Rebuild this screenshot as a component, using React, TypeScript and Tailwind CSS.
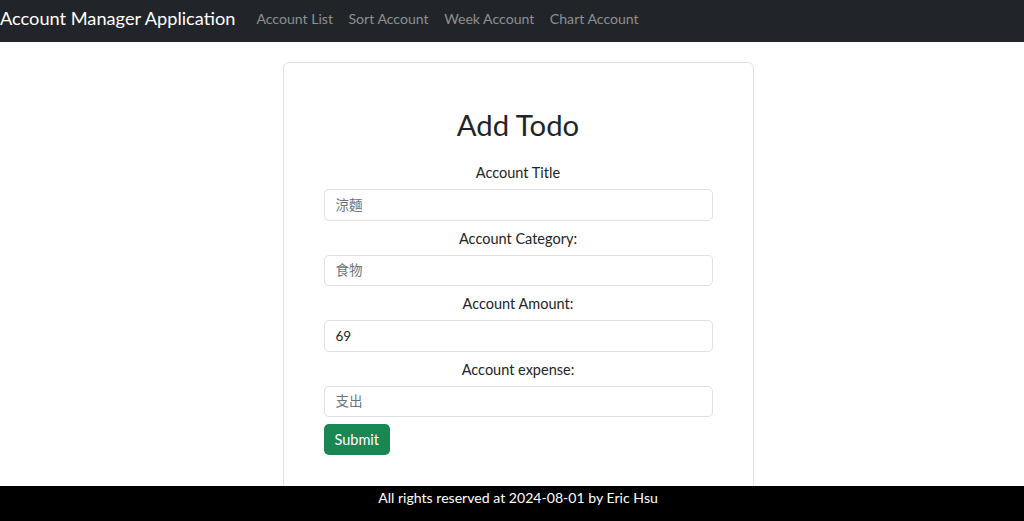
export default function App() {
  const fields = [
    { label: "Account Title", placeholder: "涼麵", value: "" },
    { label: "Account Category:", placeholder: "食物", value: "" },
    { label: "Account Amount:", placeholder: "", value: "69" },
    { label: "Account expense:", placeholder: "支出", value: "" },
  ];

  return (
    <div
      className="min-h-screen bg-white text-[#212529]"
      style={{ fontFamily: "Lato, 'Noto Sans CJK TC', sans-serif" }}
    >
      {/* Navbar */}
      <nav className="h-[42px] bg-[#212529] flex items-center pb-[5px]">
        <span className="text-white text-[18.2px] mr-[21px]">Account Manager Application</span>
        <div className="flex items-center gap-[15.5px] text-[14.1px] text-[#8e9092]">
          <span>Account List</span>
          <span>Sort Account</span>
          <span>Week Account</span>
          <span>Chart Account</span>
        </div>
      </nav>

      {/* Card */}
      <div className="flex justify-center pt-[20px] pl-[12px]">
        <div className="w-[471px] h-[460px] border border-[#dee2e6] rounded-[6px] px-[40px] pt-[38px]">
          <h1 className="text-center text-[29.3px] leading-[48px] mb-[12px]">Add Todo</h1>
          <form className="flex flex-col" onSubmit={(e) => e.preventDefault()}>
            {fields.map((f, i) => (
              <div key={i} className="flex flex-col">
                <label className={`text-center text-[14.5px] leading-[24px] ${i === 0 ? "" : "mt-[6px]"} mb-[4px]`}>
                  {f.label}
                </label>
                <input
                  className="h-[31.5px] border border-[#dee2e6] rounded-[5px] px-[11px] text-[13.5px] text-[#212529] placeholder:text-[#6c757d] outline-none"
                  placeholder={f.placeholder}
                  defaultValue={f.value}
                />
              </div>
            ))}
            <div className="mt-[7px]">
              <button
                type="submit"
                className="h-[31px] px-[11px] bg-[#198754] text-white text-[14.5px] rounded-[5px]"
              >
                Submit
              </button>
            </div>
          </form>
        </div>
      </div>

      {/* Footer */}
      <footer className="fixed bottom-0 left-0 right-0 h-[35px] bg-black text-white text-center text-[14.1px] leading-[24px] pl-[12px]">
        All rights reserved at 2024-08-01 by Eric Hsu
      </footer>
    </div>
  );
}
